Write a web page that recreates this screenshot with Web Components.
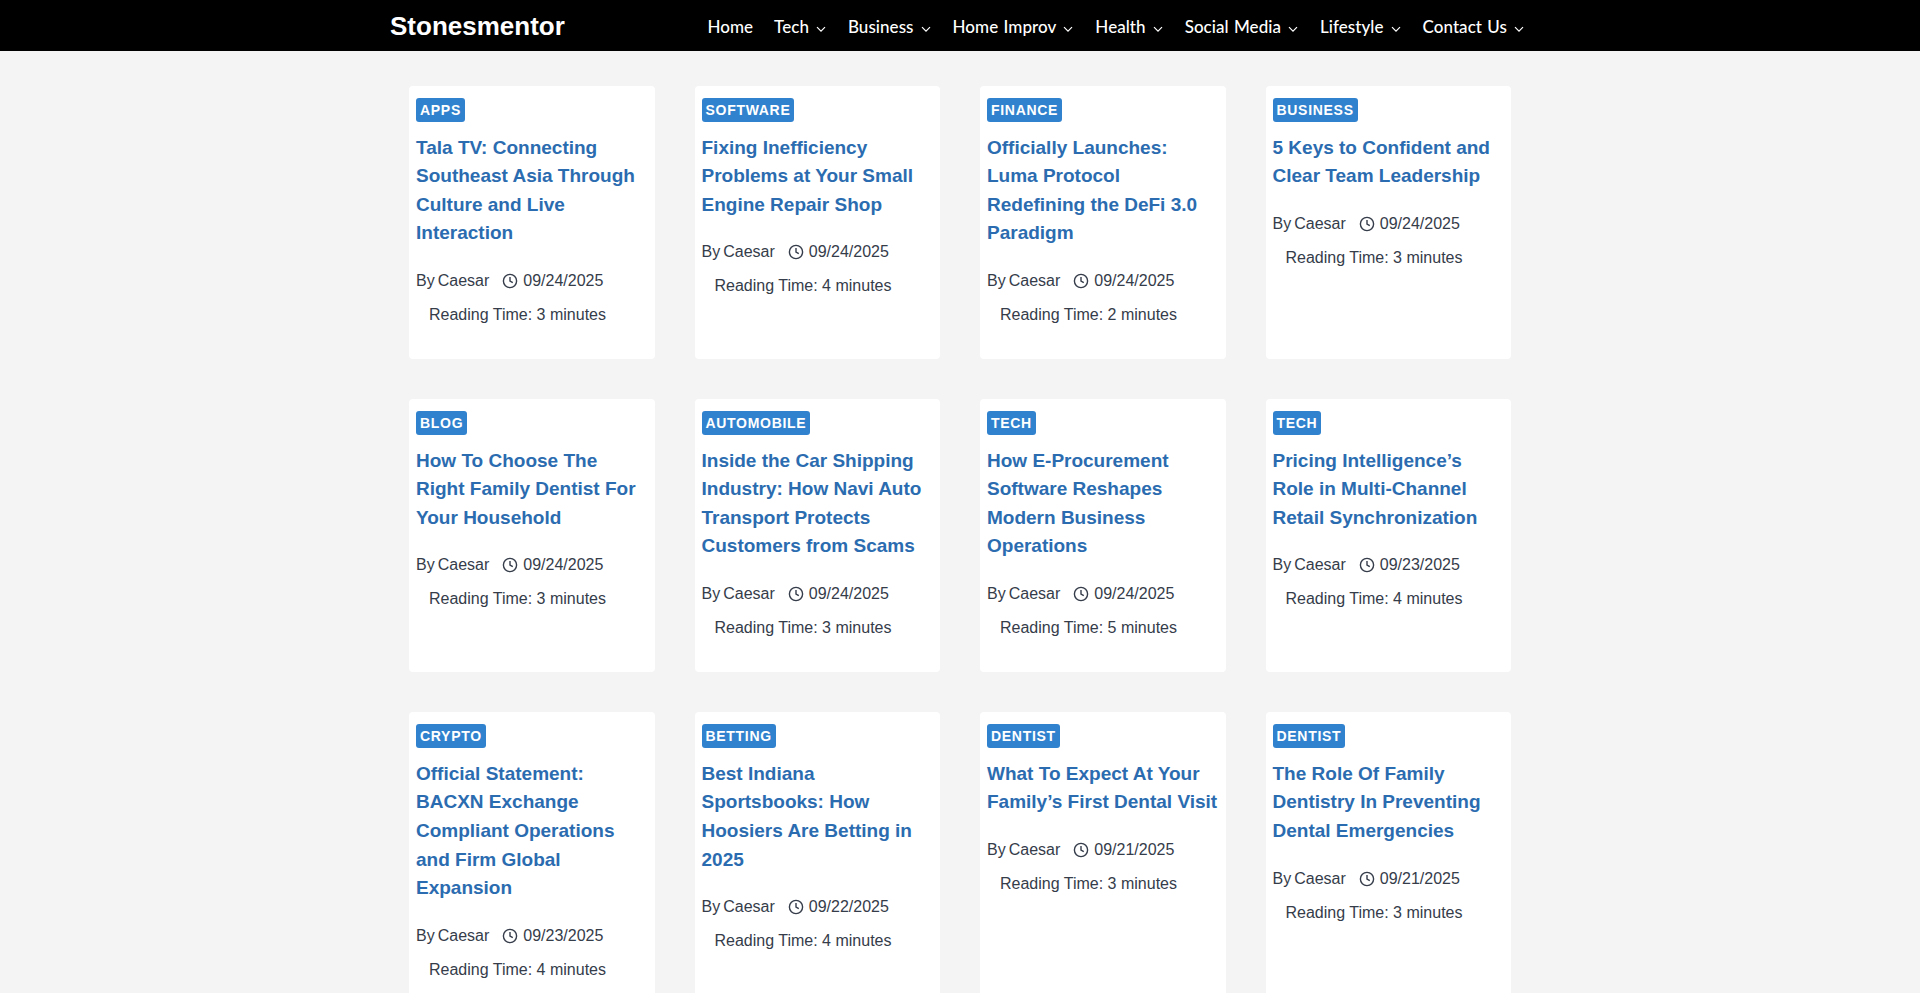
<!DOCTYPE html>
<html>
<head>
<meta charset="utf-8">
<title>Stonesmentor</title>
<style>
html, body { margin: 0; padding: 0; background: #f4f4f4; height: 993px; overflow: hidden; }
</style>
</head>
<body>
<site-header></site-header>
<post-grid></post-grid>

<script>
const chevron = `<svg class="chev" viewBox="0 0 12 12" width="12" height="12"><path d="M2 4.2l4 4 4-4" fill="none" stroke="currentColor" stroke-width="1.2"/></svg>`;

class SiteHeader extends HTMLElement {
    constructor() {
        super();
        this.attachShadow({ mode: 'open' });
        const items = [['Home', false], ['Tech', true], ['Business', true], ['Home Improv', true], ['Health', true], ['Social Media', true], ['Lifestyle', true], ['Contact Us', true]];
        this.shadowRoot.innerHTML = `
            <style>
                :host { display: block; background: #000; height: 51px; color: #fff; }
                .inner { width: 1140px; margin: 0 auto; height: 100%; display: flex; align-items: center; justify-content: space-between; box-sizing: border-box; }
                .logo { font: bold 26px "Liberation Sans", sans-serif; margin-top: 2px; }
                nav { display: flex; gap: 21px; font: 500 17px/24px Lato, sans-serif; letter-spacing: .05px; word-spacing: 1px; margin: 3px 5px 0 0; }
                a { display: flex; align-items: center; gap: 6px; }
                .chev { margin-top: 3px; }
            </style>
            <div class="inner">
                <div class="logo">Stonesmentor</div>
                <nav>${items.map(i => `<a>${i[0]}${i[1] ? chevron : ''}</a>`).join('')}</nav>
            </div>`;
    }
}

class PostCard extends HTMLElement {
    constructor() {
        super();
        this.attachShadow({ mode: 'open' });
    }
    connectedCallback() {
        this.shadowRoot.innerHTML = `
            <style>
                :host { display: block; background: #fff; border-radius: 4px; padding: 12px 7px 32.3px; box-sizing: border-box; font-family: "Liberation Sans", sans-serif; color: #353c4a; min-width: 0; }
                .badge { display: inline-block; background: #3182ce; color: #fff; font-size: 14px; font-weight: bold; line-height: 24px; height: 24px; padding: 0 4px; letter-spacing: .05em; border-radius: 3px; }
                h2 { margin: 11.5px 0 0; color: #2b6cb0; font-size: 19px; line-height: 28.6px; font-weight: bold; }
                .meta { display: flex; align-items: center; font-size: 16px; line-height: 24px; margin-top: 21px; }
                .by { margin-right: 3px; }
                .date { display: flex; align-items: center; margin-left: 13px; gap: 5px; }
                .read { font-size: 16px; line-height: 24px; margin: 10px 0 0 13px; }
            </style>
            <span class="badge">${this.getAttribute('cat')}</span>
            <h2><slot></slot></h2>
            <div class="meta">
                <span class="by">By</span><span>Caesar</span>
                <span class="date">
                    <svg viewBox="0 0 16 16" width="16" height="16" fill="none" stroke="currentColor" stroke-width="1.4"><circle cx="8" cy="8" r="6.6"/><path d="M8 4v4l2.8 1.6"/></svg>
                    ${this.getAttribute('date')}
                </span>
            </div>
            <div class="read">Reading Time: ${this.getAttribute('mins')} minutes</div>`;
    }
}

const posts = [
    ['APPS', 'Tala TV: Connecting Southeast Asia Through Culture and Live Interaction', '09/24/2025', 3],
    ['SOFTWARE', 'Fixing Inefficiency Problems at Your Small Engine Repair Shop', '09/24/2025', 4],
    ['FINANCE', 'Officially Launches: Luma Protocol Redefining the DeFi 3.0 Paradigm', '09/24/2025', 2],
    ['BUSINESS', '5 Keys to Confident and Clear Team Leadership', '09/24/2025', 3],
    ['BLOG', 'How To Choose The Right Family Dentist For Your Household', '09/24/2025', 3],
    ['AUTOMOBILE', 'Inside the Car Shipping Industry: How Navi Auto Transport Protects Customers from Scams', '09/24/2025', 3],
    ['TECH', 'How E-Procurement Software Reshapes Modern Business Operations', '09/24/2025', 5],
    ['TECH', 'Pricing Intelligence’s Role in Multi-Channel Retail Synchronization', '09/23/2025', 4],
    ['CRYPTO', 'Official Statement: BACXN Exchange Compliant Operations and Firm Global Expansion', '09/23/2025', 4],
    ['BETTING', 'Best Indiana Sportsbooks: How Hoosiers Are Betting in 2025', '09/22/2025', 4],
    ['DENTIST', 'What To Expect At Your Family’s First Dental Visit', '09/21/2025', 3],
    ['DENTIST', 'The Role Of Family Dentistry In Preventing Dental Emergencies', '09/21/2025', 3]
];

class PostGrid extends HTMLElement {
    constructor() {
        super();
        this.attachShadow({ mode: 'open' });
        this.shadowRoot.innerHTML = `
            <style>
                :host { display: block; width: 1102px; margin: 35px auto 0; }
                .grid { display: grid; grid-template-columns: repeat(4, 1fr); gap: 40px; }
            </style>
            <div class="grid">
                ${posts.map(p => `<post-card cat="${p[0]}" date="${p[2]}" mins="${p[3]}">${p[1]}</post-card>`).join('')}
            </div>`;
    }
}

customElements.define('site-header', SiteHeader);
customElements.define('post-card', PostCard);
customElements.define('post-grid', PostGrid);
</script>
</body>
</html>
